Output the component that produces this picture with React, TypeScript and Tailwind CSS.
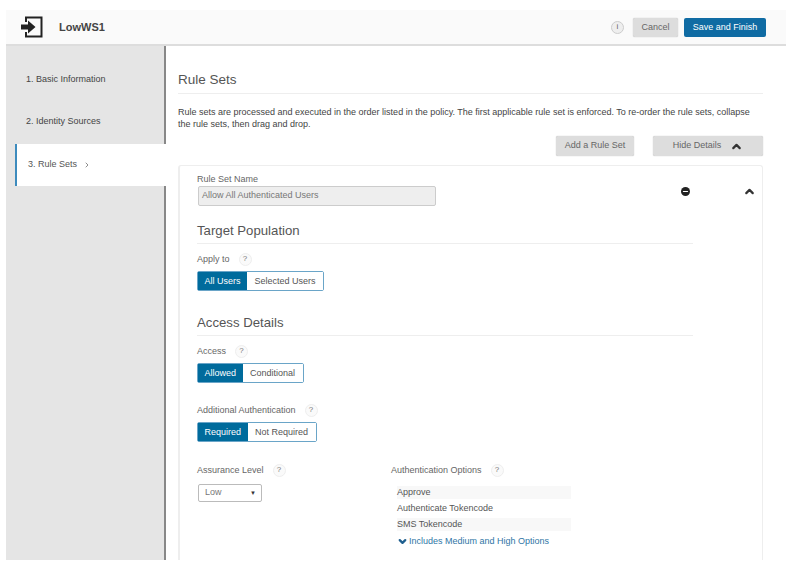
import { ChevronDown, ChevronRight, ChevronUp, Minus } from "lucide-react";

function Help() {
  return (
    <span className="flex h-[13px] w-[13px] items-center justify-center rounded-full border border-[#eeeeee] bg-[#fafafa] text-[8px] text-[#777]">?</span>
  );
}

function Toggle({ on, off }: { on: string; off: string }) {
  return (
    <div className="flex h-[20px] w-fit rounded-[2px] border border-[#6aa5c8] text-[9px] leading-[18px]">
      <span className="bg-[#006b9c] px-[6.5px] text-white">{on}</span>
      <span className="bg-white px-[7.5px] text-[#555]">{off}</span>
    </div>
  );
}

function Label({ text }: { text: string }) {
  return (
    <div className="flex h-[14px] items-center gap-[9px] text-[9px] text-[#666]">
      <span className="pt-[2px]">{text}</span>
      <Help />
    </div>
  );
}

function Step({ text, active }: { text: string; active?: boolean }) {
  if (active) {
    return (
      <div className="relative z-10 -mr-[2px] ml-[9px] flex h-[42px] items-center gap-[6px] border-l-2 border-[#3d8bbd] bg-white pl-[11px] text-[9px] text-[#555]">
        <span>{text}</span>
        <ChevronRight size={8} strokeWidth={2.5} className="text-[#777]" />
      </div>
    );
  }
  return <div className="flex h-[42px] items-center pl-[20px] text-[9px] text-[#444]">{text}</div>;
}

export default function App() {
  return (
    <div className="h-[576px] w-[792px] overflow-hidden bg-white pb-[16px] pl-[6px] pr-[6px] pt-[10px] font-['Liberation_Sans',Arial,sans-serif]">
      <header className="flex h-[36px] items-center border-b-2 border-[#dddddd] bg-[#fafafa] pl-[14px] pr-[20px]">
        <svg width="24" height="22" viewBox="0 0 24 22" fill="none" className="text-[#222]">
          <path d="M6 6V1.5H21.5V20.5H6V16" stroke="currentColor" strokeWidth="2" />
          <path d="M1 8.5H8V4.5L15.5 11L8 17.5V13.5H1Z" fill="currentColor" />
        </svg>
        <span className="ml-[15px] text-[11px] font-bold text-[#444]">LowWS1</span>
        <div className="ml-auto flex items-center">
          <span className="flex h-[13px] w-[13px] items-center justify-center rounded-full border border-[#cccccc] bg-[#eeeeee] text-[8px] text-[#666]">i</span>
          <button className="ml-[9px] h-[19px] w-[45px] rounded-[2px] bg-[#dddddd] pt-[1px] text-[9px] text-[#666] shadow-[0_0_1px_#aaa]">Cancel</button>
          <button className="ml-[6px] h-[19px] w-[82px] rounded-[2px] bg-[#0f6ba3] pt-[1px] text-[9px] text-white">Save and Finish</button>
        </div>
      </header>
      <div className="flex h-[514px]">
        <nav className="w-[160px] shrink-0 border-r-2 border-[#888888] bg-[#e5e5e5] pt-[13px]">
          <Step text="1. Basic Information" />
          <Step text="2. Identity Sources" />
          <div className="h-[1px]" />
          <Step text="3. Rule Sets" active />
        </nav>
        <main className="flex-1 overflow-hidden bg-white pl-[12px] pr-[23px]">
          <h1 className="flex h-[48px] items-end border-b border-[#eeeeee] pb-[3px] text-[13.5px] leading-[20px] text-[#555]">Rule Sets</h1>
          <p className="mt-[13px] text-[9px] leading-[11.5px] text-[#444]">
            Rule sets are processed and executed in the order listed in the policy. The first applicable rule set is enforced. To re-order the rule sets, collapse the rule sets, then drag and drop.
          </p>
          <div className="mt-[6px] flex justify-end gap-[19px]">
            <button className="h-[20px] w-[78px] rounded-[2px] bg-[#dddddd] text-[9px] text-[#666] shadow-[0_0_1px_#aaa]">Add a Rule Set</button>
            <button className="flex h-[20px] w-[110px] items-center justify-center gap-[9px] rounded-[2px] bg-[#dddddd] text-[9px] text-[#666] shadow-[0_0_1px_#aaa]">
              Hide Details
              <ChevronUp size={13} strokeWidth={4} className="text-[#333]" />
            </button>
          </div>
          <section className="relative mt-[9px] h-[400px] rounded-t-[3px] border-l-2 border-r border-t border-[#eeeeee] pl-[17px] pt-[7px]">
            <span className="absolute left-[501px] top-[21px] flex h-[9px] w-[9px] items-center justify-center rounded-full bg-[#222]">
              <Minus size={7} strokeWidth={4} className="text-white" />
            </span>
            <ChevronUp size={13} strokeWidth={4} className="absolute left-[563px] top-[19px] text-[#333]" />
            <div className="text-[9px] leading-[12px] text-[#666]">Rule Set Name</div>
            <div className="ml-[1px] mt-[1px] flex h-[20px] w-[238px] items-center rounded-[2px] border border-[#cccccc] bg-[#eeeeee] pl-[3px] text-[9px] text-[#777]">Allow All Authenticated Users</div>
            <div className="w-[496px]">
              <h2 className="mt-[15px] h-[23px] border-b border-[#eeeeee] text-[13.2px] leading-[20px] text-[#555]">Target Population</h2>
              <div className="mt-[8px]"><Label text="Apply to" /></div>
              <div className="mt-[5px]"><Toggle on="All Users" off="Selected Users" /></div>
              <h2 className="mt-[22px] h-[23px] border-b border-[#eeeeee] text-[13.2px] leading-[20px] text-[#555]">Access Details</h2>
              <div className="mt-[8px]"><Label text="Access" /></div>
              <div className="mt-[5px]"><Toggle on="Allowed" off="Conditional" /></div>
              <div className="mt-[20px]"><Label text="Additional Authentication" /></div>
              <div className="mt-[5px]"><Toggle on="Required" off="Not Required" /></div>
            </div>
            <div className="mt-[21px] flex">
              <div className="w-[194px]">
                <Label text="Assurance Level" />
                <div className="ml-[1px] mt-[7px] flex h-[18px] w-[64px] items-center justify-between rounded-[2px] border border-[#bbbbbb] pl-[6px] pr-[5px] text-[9px] text-[#777]">
                  Low
                  <span className="text-[6px] text-[#333]">▼</span>
                </div>
              </div>
              <div>
                <Label text="Authentication Options" />
                <ul className="ml-[6px] mt-[9px] w-[174px] text-[9px] text-[#555]">
                  <li className="mb-[3px] h-[13px] bg-[#f8f8f8] leading-[13px]">Approve</li>
                  <li className="mb-[3px] h-[13px] leading-[13px]">Authenticate Tokencode</li>
                  <li className="mb-[4px] h-[13px] bg-[#f8f8f8] leading-[13px]">SMS Tokencode</li>
                  <li className="flex h-[13px] items-center gap-[1px] text-[#2f76a6]">
                    <ChevronDown size={11} strokeWidth={5} className="text-[#1f5f8f]" />
                    Includes Medium and High Options
                  </li>
                </ul>
              </div>
            </div>
          </section>
        </main>
      </div>
    </div>
  );
}
